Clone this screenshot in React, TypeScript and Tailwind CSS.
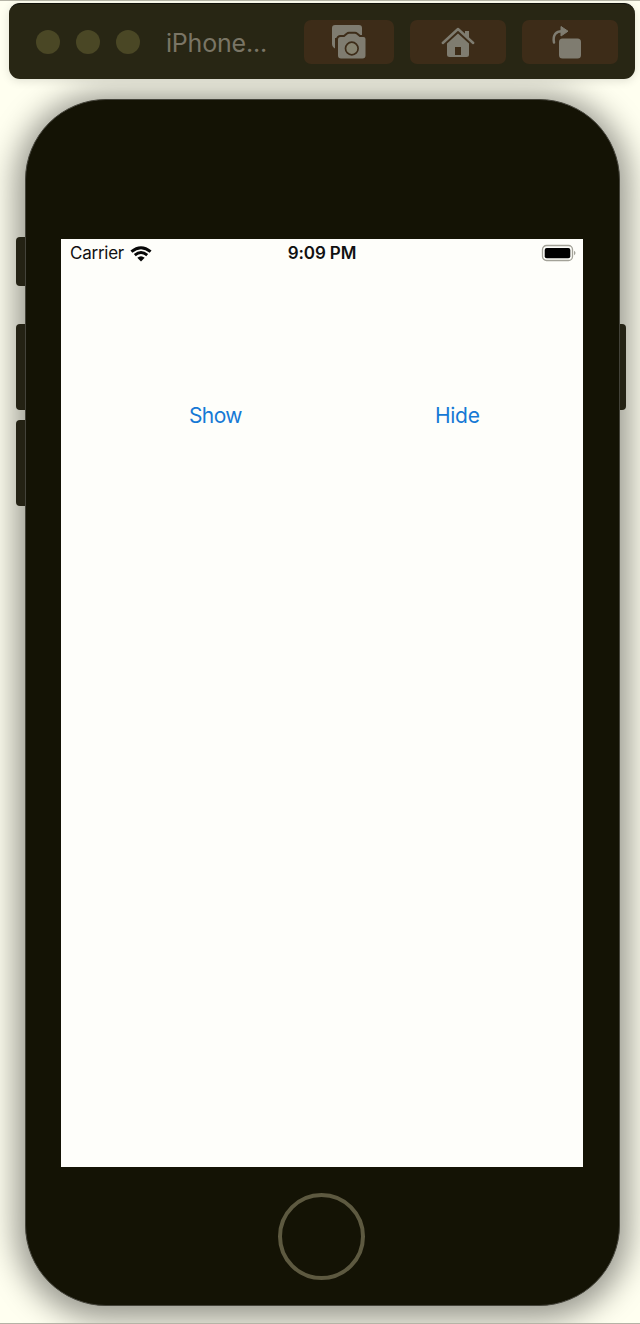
function CameraIcon() {
  return (
    <svg width="36" height="36" viewBox="0 0 36 36" className="ml-[-1px]">
      <path d="M4 1h24a3 3 0 0 1 3 3v10H4v10.500C2.500 24 1 22 1 20V4a3 3 0 0 1 3-3Z" fill="#7f7c70" />
      <path
        d="M9.500 12h3.500l3-2.500a3 3 0 0 1 2-.8h6a3 3 0 0 1 2 .8l3 2.500h3.500a3 3 0 0 1 3 3V31.500a4 4 0 0 1-4 4H10a4 4 0 0 1-4-4V15.500A3.500 3.500 0 0 1 9.500 12Z"
        fill="#7f7c70"
        stroke="#3d2c18"
        strokeWidth="2"
      />
      <circle cx="20.800" cy="24.500" r="6.300" fill="#85826f" stroke="#3d2c18" strokeWidth="1.700" />
    </svg>
  );
}

function HomeIcon() {
  return (
    <svg width="34" height="32" viewBox="0 0 34 32">
      <path d="M24 5h4v8l-4-4Z" fill="#7f7c70" />
      <path d="M1.800 17 17 3l15.200 14" fill="none" stroke="#7f7c70" strokeWidth="2.500" strokeLinecap="round" strokeLinejoin="round" />
      <path d="M6 17.500 17 7.500l11 10v11a2.500 2.500 0 0 1-2.500 2.500h-17A2.500 2.500 0 0 1 6 28.500Z" fill="#7f7c70" />
      <path d="M14 21h6v8h-6Z" fill="#3d2c18" />
    </svg>
  );
}

function RotateIcon() {
  return (
    <svg width="32" height="34" viewBox="0 0 32 34" className="ml-[-6px]">
      <path d="M3 17.500C1.500 10 5 6.200 11 6.200" fill="none" stroke="#7f7c70" strokeWidth="2.500" strokeLinecap="round" />
      <path d="M10 1.500 17 6.200 10 11Z" fill="#7f7c70" stroke="#7f7c70" strokeLinejoin="round" />
      <rect x="8" y="13.500" width="22" height="20" rx="3.500" fill="#7f7c70" />
    </svg>
  );
}

function WifiIcon() {
  return (
    <svg width="22" height="16" viewBox="0 0 22 16" fill="none" stroke="#080808" strokeWidth="2.900">
      <path d="M1.400 5.700Q11-2.300 20.600 5.700" />
      <path d="M4.800 9.200Q11 4 17.200 9.200" />
      <path d="M7.300 11.800Q11 8.800 14.700 11.800L11 15.500Z" fill="#080808" stroke="none" />
    </svg>
  );
}

function BatteryIcon() {
  return (
    <svg width="35" height="18" viewBox="0 0 35 18" className="-mt-[2px]">
      <rect x="1.500" y="1.500" width="30" height="15" rx="4" fill="none" stroke="#a3a298" strokeWidth="1.300" />
      <rect x="3.700" y="3.900" width="25.600" height="10.300" rx="2" fill="#000" />
      <path d="M33 6.700q1.500.7 1.500 2.300t-1.500 2.300Z" fill="#a3a298" />
    </svg>
  );
}

const toolButton = "flex h-[44px] items-center justify-center rounded-[7px] bg-[#3d2c18]";

export default function App() {
  return (
    <div className="h-[1324px] w-[640px] overflow-hidden border-y border-[#b5b4a6] bg-[#fffff0] pt-[2px] font-[Inter,sans-serif]">
      <header className="relative z-10 ml-[9px] flex h-[76px] w-[626px] items-center rounded-[11px] border-t border-[#11110a] bg-[#282614] pl-[27px] shadow-[0_2px_10px_rgba(0,0,0,0.12)]">
        <div className="flex gap-[16px]">
          <span className="size-[24px] rounded-full bg-[#4a4725]" />
          <span className="size-[24px] rounded-full bg-[#4a4725]" />
          <span className="size-[24px] rounded-full bg-[#4a4725]" />
        </div>
        <h1 className="ml-[26px] mt-[3px] w-[138px] whitespace-nowrap text-[25px] leading-none tracking-[-0.2px] text-[#7a7565]">iPhone...</h1>
        <div className="flex gap-[16px]">
          <button aria-label="Screenshot" className={`${toolButton} w-[90px]`}><CameraIcon /></button>
          <button aria-label="Home" className={`${toolButton} w-[96px]`}><HomeIcon /></button>
          <button aria-label="Rotate" className={`${toolButton} w-[96px]`}><RotateIcon /></button>
        </div>
      </header>
      <div className="mt-[20px] flex pl-[16px]">
        <div className="relative z-10 flex w-[9px] flex-col pt-[138px]">
          <span className="h-[49px] rounded-l-[4px] bg-[#242214]" />
          <span className="mt-[38px] h-[86px] rounded-l-[4px] bg-[#242214]" />
          <span className="mt-[10px] h-[86px] rounded-l-[4px] bg-[#242214]" />
        </div>
        <main className="flex h-[1207px] w-[595px] flex-col items-center rounded-[81px] border border-[#44433a] bg-[#141305] pt-[139px] shadow-[0_4px_30px_10px_rgba(0,0,0,0.4)]">
          <section className="mr-[1px] h-[928px] w-[522px] bg-[#fefefa]">
            <div className="grid h-[30px] grid-cols-3 items-center pl-[9px] pr-[7px] text-[#111]">
              <div className="flex items-center gap-[6px] text-[17px] tracking-[-0.25px]">Carrier <WifiIcon /></div>
              <div className="pr-[2px] text-center text-[17px] font-semibold tracking-[-0.1px]">9:09 PM</div>
              <div className="flex justify-end"><BatteryIcon /></div>
            </div>
            <div className="flex pl-[128px] pt-[131px] text-[21px] leading-[32px] text-[#1679d5]">
              <button className="w-[246px] text-left tracking-[-0.6px]">Show</button>
              <button className="tracking-[-0.3px]">Hide</button>
            </div>
          </section>
          <button aria-label="Home button" className="mr-[3px] mt-[26px] size-[87px] rounded-full border-[4px] border-[#5d5940]" />
        </main>
        <span className="mt-[225px] h-[86px] w-[6px] rounded-r-[4px] bg-[#242214]" />
      </div>
    </div>
  );
}
